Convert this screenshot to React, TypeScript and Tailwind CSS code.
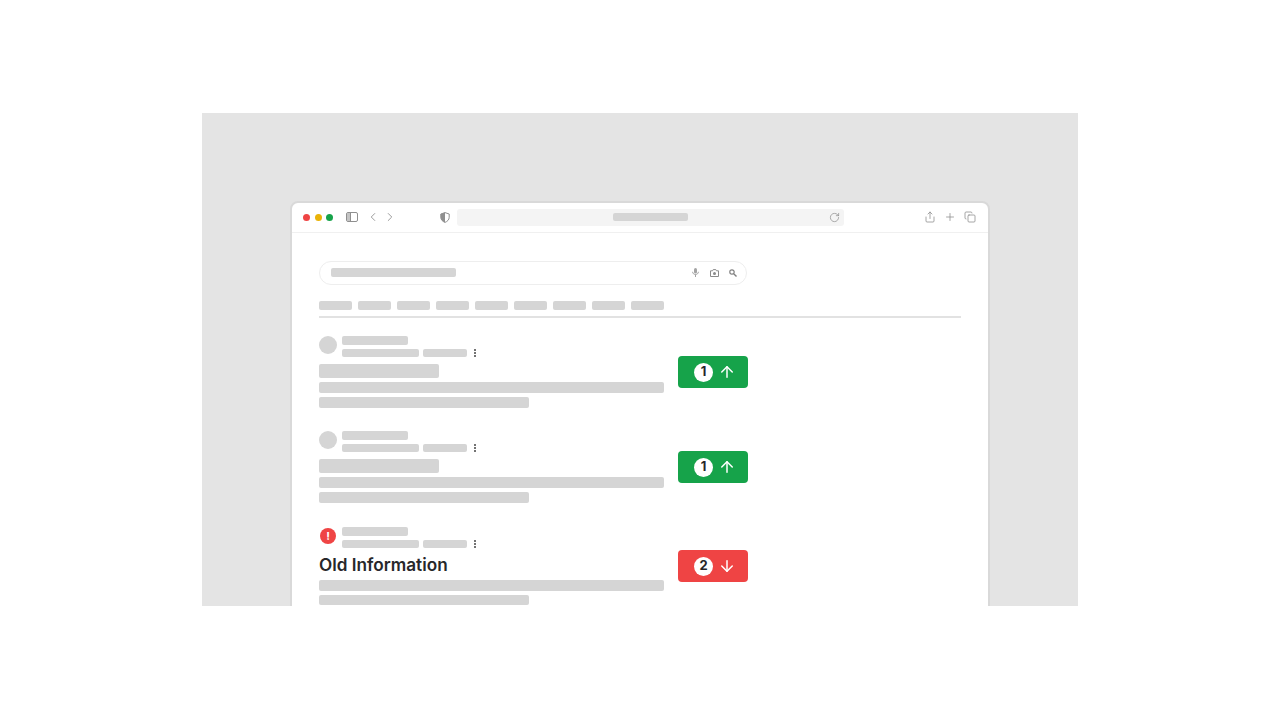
import { ArrowDown, ArrowUp, ChevronLeft, ChevronRight, Copy, Plus, RotateCw, Share } from "lucide-react";

const tabs = [0, 1, 2, 3, 4, 5, 6, 7, 8];

function Shield() {
  return (
    <svg width="10" height="11" viewBox="0 0 10 11" className="shrink-0">
      <path d="M5 .6 9.2 2v3.2c0 2.6-1.8 4.2-4.2 5.2C2.6 9.400.8 7.800.8 5.200V2Z" fill="none" stroke="#8f8f8f" strokeWidth="1" />
      <path d="M5 .6V10.400C2.600 9.400.8 7.800.8 5.200V2Z" fill="#8f8f8f" />
    </svg>
  );
}

function Sidebar() {
  return (
    <svg width="12" height="10" viewBox="0 0 12 10" className="shrink-0">
      <rect x=".5" y=".5" width="11" height="9" rx="1.500" fill="none" stroke="#8f8f8f" strokeWidth="1" />
      <rect x="1" y="1" width="3.500" height="8" fill="#c4c4c4" />
      <path d="M4.500 1v8" stroke="#8f8f8f" strokeWidth="1" />
    </svg>
  );
}

function Mic() {
  return (
    <svg width="7" height="9" viewBox="0 0 7 9" className="shrink-0">
      <rect x="2" y="0" width="3" height="5.500" rx="1.500" fill="#a3a3a3" />
      <path d="M.6 3.800c0 3.600 5.800 3.600 5.800 0M3.500 6.500V9" fill="none" stroke="#a3a3a3" strokeWidth="1" />
    </svg>
  );
}

function Camera() {
  return (
    <svg width="9" height="8" viewBox="0 0 9 8" className="shrink-0">
      <path d="M.5 1.800h2L3.200.6h2.600l.7 1.200h2V7.500H.5Z" fill="none" stroke="#8a8a8a" strokeWidth="1" />
      <circle cx="4.500" cy="4.500" r="1.500" fill="#8a8a8a" />
    </svg>
  );
}

function Lens() {
  return (
    <svg width="8" height="8" viewBox="0 0 8 8" className="shrink-0">
      <circle cx="3" cy="3" r="2.200" fill="none" stroke="#808080" strokeWidth="1.200" />
      <path d="M4.700 4.700 7.500 7.500" stroke="#808080" strokeWidth="1.400" />
    </svg>
  );
}

function Bar({ cls }: { cls: string }) {
  return <div className={`bg-[#d5d5d5] rounded-[2px] shrink-0 ${cls}`} />;
}

function Meta() {
  return (
    <div className="ml-[5px]">
      <Bar cls="w-[66px] h-[9px]" />
      <div className="flex items-center gap-1 mt-1">
        <Bar cls="w-[77px] h-[8px]" />
        <Bar cls="w-[44px] h-[8px]" />
        <div className="flex flex-col gap-[1px] ml-[3px]">
          <div className="w-[2px] h-[2px] rounded-full bg-[#444]" />
          <div className="w-[2px] h-[2px] rounded-full bg-[#444]" />
          <div className="w-[2px] h-[2px] rounded-full bg-[#444]" />
        </div>
      </div>
    </div>
  );
}

function Badge({ n, up }: { n: number; up: boolean }) {
  return (
    <div className={`w-[70px] h-[32px] rounded-[4px] flex items-center pl-[16px] gap-[5px] shrink-0 ${up ? "bg-[#16a34a]" : "bg-[#ef4444]"}`}>
      <span className="w-[19px] h-[19px] rounded-full bg-white flex items-center justify-center text-[13px] font-bold text-[#27272a]">{n}</span>
      {up ? <ArrowUp size={18} color="#fff" strokeWidth={2} /> : <ArrowDown size={18} color="#fff" strokeWidth={2} />}
    </div>
  );
}

function Result({ old, n, cls }: { old?: boolean; n: number; cls: string }) {
  return (
    <div className={`flex items-center gap-[14px] ${cls}`}>
      <div className="w-[345px] shrink-0">
        <div className="flex items-start">
          {old ? (
            <div className="w-[16px] h-[16px] m-[1px] rounded-full bg-[#ef4444] flex items-center justify-center text-[11px] font-bold text-white">!</div>
          ) : (
            <div className="w-[18px] h-[18px] rounded-full bg-[#d5d5d5]" />
          )}
          <Meta />
        </div>
        {old ? (
          <div className="text-[17.2px] leading-[24px] font-semibold text-[#27272a] mt-[5px]">Old Information</div>
        ) : (
          <Bar cls="w-[120px] h-[14px] mt-[7px]" />
        )}
        <Bar cls={`w-[345px] h-[11px] ${old ? "mt-[3px]" : "mt-[4px]"}`} />
        <Bar cls={`w-[210px] mt-[4px] ${old ? "h-[10px]" : "h-[11px]"}`} />
      </div>
      <Badge n={n} up={!old} />
    </div>
  );
}

export default function App() {
  return (
    <div className="h-[720px] bg-white pt-[113px] font-['Inter',sans-serif]">
      <div className="w-[876px] h-[493px] ml-[202px] bg-[#e4e4e4] overflow-hidden pt-[88px]">
        <div className="w-[700px] h-[420px] ml-[88px] bg-white border-2 border-[#d9d9d9] rounded-[8px]">
          {/* Toolbar */}
          <div className="h-[30px] flex items-center border-b border-[#f0f0f0] pl-[11px] pb-[1px]">
            <div className="flex gap-[4.500px]">
              <div className="w-[7px] h-[7px] rounded-full bg-[#ef4444]" />
              <div className="w-[7px] h-[7px] rounded-full bg-[#eab308]" />
              <div className="w-[7px] h-[7px] rounded-full bg-[#16a34a]" />
            </div>
            <div className="ml-[13px]"><Sidebar /></div>
            <ChevronLeft size={14} color="#8f8f8f" strokeWidth={1.500} className="ml-[8px]" />
            <ChevronRight size={14} color="#8f8f8f" strokeWidth={1.500} className="ml-[3px]" />
            <div className="ml-[43px]"><Shield /></div>
            <div className="ml-[7px] w-[387px] h-[17px] bg-[#f4f4f4] rounded-[3px] flex items-center justify-between pl-[156px] pr-[4px]">
              <Bar cls="w-[75px] h-[8px]" />
              <RotateCw size={11} color="#8f8f8f" strokeWidth={1.600} />
            </div>
            <Share size={12} color="#8f8f8f" strokeWidth={1.600} className="ml-[80px]" />
            <Plus size={12} color="#8f8f8f" strokeWidth={1.600} className="ml-[8px]" />
            <Copy size={12} color="#8f8f8f" strokeWidth={1.600} className="ml-[8px]" />
          </div>
          {/* Page */}
          <div className="pl-[27px] pt-[28px]">
            <div className="w-[428px] h-[24px] rounded-full border border-[#eeeeee] flex items-center pl-[11px] pr-[9px] pb-[1px]">
              <Bar cls="w-[125px] h-[9px]" />
              <div className="ml-auto flex items-center">
                <Mic />
                <div className="ml-[11px]"><Camera /></div>
                <div className="ml-[10px]"><Lens /></div>
              </div>
            </div>
            <div className="flex gap-[6px] mt-[16px]">
              {tabs.map((t) => (
                <Bar key={t} cls="w-[33px] h-[9px]" />
              ))}
            </div>
            <div className="w-[642px] h-[2px] bg-[#e2e2e2] mt-[6px]" />
            <Result n={1} cls="mt-[18px]" />
            <Result n={1} cls="mt-[23px]" />
            <Result n={2} old cls="mt-[24px]" />
          </div>
        </div>
      </div>
    </div>
  );
}
